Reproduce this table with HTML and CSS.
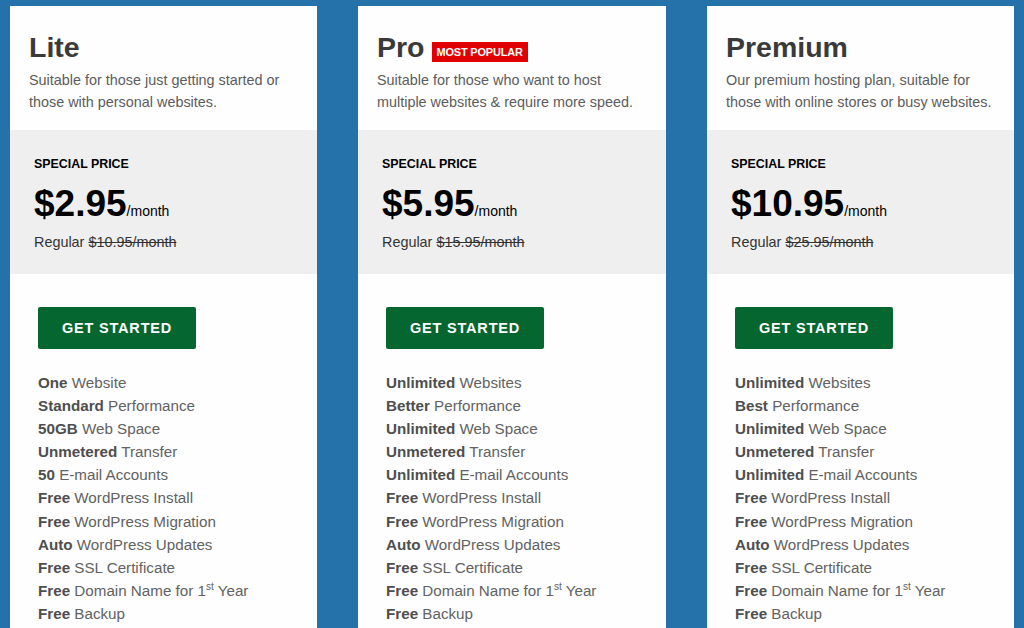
FILE: index.html
```html
<!DOCTYPE html>
<html lang="en">
<head>
<meta charset="utf-8">
<title>Hosting Plans</title>
<link rel="stylesheet" href="styles.css">
</head>
<body>
<div class="plans">
  <div class="card">
    <div class="head">
      <div class="title-row"><h2 class="title">Lite</h2></div>
      <p class="desc">Suitable for those just getting started or those with personal websites.</p>
    </div>
    <div class="price-box">
      <div class="special">SPECIAL PRICE</div>
      <div class="price"><span class="amount">$2.95</span><span class="per">/month</span></div>
      <div class="regular">Regular <s>$10.95/month</s></div>
    </div>
    <div class="body">
      <a class="btn">GET STARTED</a>
      <ul class="features">
        <li><b>One</b> Website</li>
        <li><b>Standard</b> Performance</li>
        <li><b>50GB</b> Web Space</li>
        <li><b>Unmetered</b> Transfer</li>
        <li><b>50</b> E-mail Accounts</li>
        <li><b>Free</b> WordPress Install</li>
        <li><b>Free</b> WordPress Migration</li>
        <li><b>Auto</b> WordPress Updates</li>
        <li><b>Free</b> SSL Certificate</li>
        <li><b>Free</b> Domain Name for 1<sup>st</sup> Year</li>
        <li><b>Free</b> Backup</li>
      </ul>
    </div>
  </div>

  <div class="card">
    <div class="head">
      <div class="title-row"><h2 class="title">Pro</h2><span class="badge">MOST POPULAR</span></div>
      <p class="desc">Suitable for those who want to host multiple websites &amp; require more speed.</p>
    </div>
    <div class="price-box">
      <div class="special">SPECIAL PRICE</div>
      <div class="price"><span class="amount">$5.95</span><span class="per">/month</span></div>
      <div class="regular">Regular <s>$15.95/month</s></div>
    </div>
    <div class="body">
      <a class="btn">GET STARTED</a>
      <ul class="features">
        <li><b>Unlimited</b> Websites</li>
        <li><b>Better</b> Performance</li>
        <li><b>Unlimited</b> Web Space</li>
        <li><b>Unmetered</b> Transfer</li>
        <li><b>Unlimited</b> E-mail Accounts</li>
        <li><b>Free</b> WordPress Install</li>
        <li><b>Free</b> WordPress Migration</li>
        <li><b>Auto</b> WordPress Updates</li>
        <li><b>Free</b> SSL Certificate</li>
        <li><b>Free</b> Domain Name for 1<sup>st</sup> Year</li>
        <li><b>Free</b> Backup</li>
      </ul>
    </div>
  </div>

  <div class="card">
    <div class="head">
      <div class="title-row"><h2 class="title">Premium</h2></div>
      <p class="desc">Our premium hosting plan, suitable for those with online stores or busy websites.</p>
    </div>
    <div class="price-box">
      <div class="special">SPECIAL PRICE</div>
      <div class="price"><span class="amount">$10.95</span><span class="per">/month</span></div>
      <div class="regular">Regular <s>$25.95/month</s></div>
    </div>
    <div class="body">
      <a class="btn">GET STARTED</a>
      <ul class="features">
        <li><b>Unlimited</b> Websites</li>
        <li><b>Best</b> Performance</li>
        <li><b>Unlimited</b> Web Space</li>
        <li><b>Unmetered</b> Transfer</li>
        <li><b>Unlimited</b> E-mail Accounts</li>
        <li><b>Free</b> WordPress Install</li>
        <li><b>Free</b> WordPress Migration</li>
        <li><b>Auto</b> WordPress Updates</li>
        <li><b>Free</b> SSL Certificate</li>
        <li><b>Free</b> Domain Name for 1<sup>st</sup> Year</li>
        <li><b>Free</b> Backup</li>
      </ul>
    </div>
  </div>
</div>
</body>
</html>
```

FILE: styles.css
```css
html, body {
  margin: 0;
  padding: 0;
  height: 628px;
  overflow: hidden;
}
body {
  background: #2472a9;
  font-family: "Liberation Sans", Arial, sans-serif;
}
.plans {
  display: grid;
  grid-template-columns: 307px 308px 307px;
  column-gap: 41px;
  padding: 6px 0 0 10px;
}
.card {
  background: #fefefe;
  min-height: 700px;
}
.head {
  padding: 24px 19px 17px 19px;
}
.title-row {
  display: flex;
  align-items: flex-end;
  gap: 7px;
}
.title {
  margin: 0;
  font-size: 28.5px;
  line-height: 34px;
  font-weight: 700;
  color: #3a3a3a;
}
.badge {
  background: #e00000;
  color: #fff;
  font-size: 11px;
  font-weight: 700;
  letter-spacing: -0.2px;
  height: 20px;
  line-height: 20px;
  padding: 0 5px 0 5px;
  margin-bottom: 2px;
}
.desc {
  margin: 5px 0 0 0;
  font-size: 14.4px;
  line-height: 22px;
  color: #5c5c5c;
}
.price-box {
  background: #efefef;
  height: 144px;
  box-sizing: border-box;
  padding: 27px 24px 0 24px;
  color: #000;
}
.special {
  font-size: 12.4px;
  line-height: 15px;
  font-weight: 700;
}
.price {
  margin-top: 11px;
  line-height: 42px;
}
.amount {
  font-size: 37px;
  font-weight: 700;
}
.per {
  font-size: 14px;
}
.regular {
  margin-top: 0;
  font-size: 14.4px;
  line-height: 20px;
  color: #333;
}
.regular s {
  color: #333;
}
.body {
  padding: 33px 28px 0 28px;
}
.btn {
  display: inline-block;
  background: #05672f;
  color: #fff;
  font-size: 14.5px;
  font-weight: 700;
  letter-spacing: 0.8px;
  line-height: 42px;
  height: 42px;
  padding: 0 24px;
  border-radius: 2px;
}
.features {
  list-style: none;
  margin: 22px 0 0 0;
  padding: 0;
  font-size: 15.2px;
  line-height: 23.1px;
  color: #626262;
}
.features b {
  color: #4e4e4e;
}
.features sup {
  font-size: 10px;
  line-height: 0;
  vertical-align: 6px;
}
```
